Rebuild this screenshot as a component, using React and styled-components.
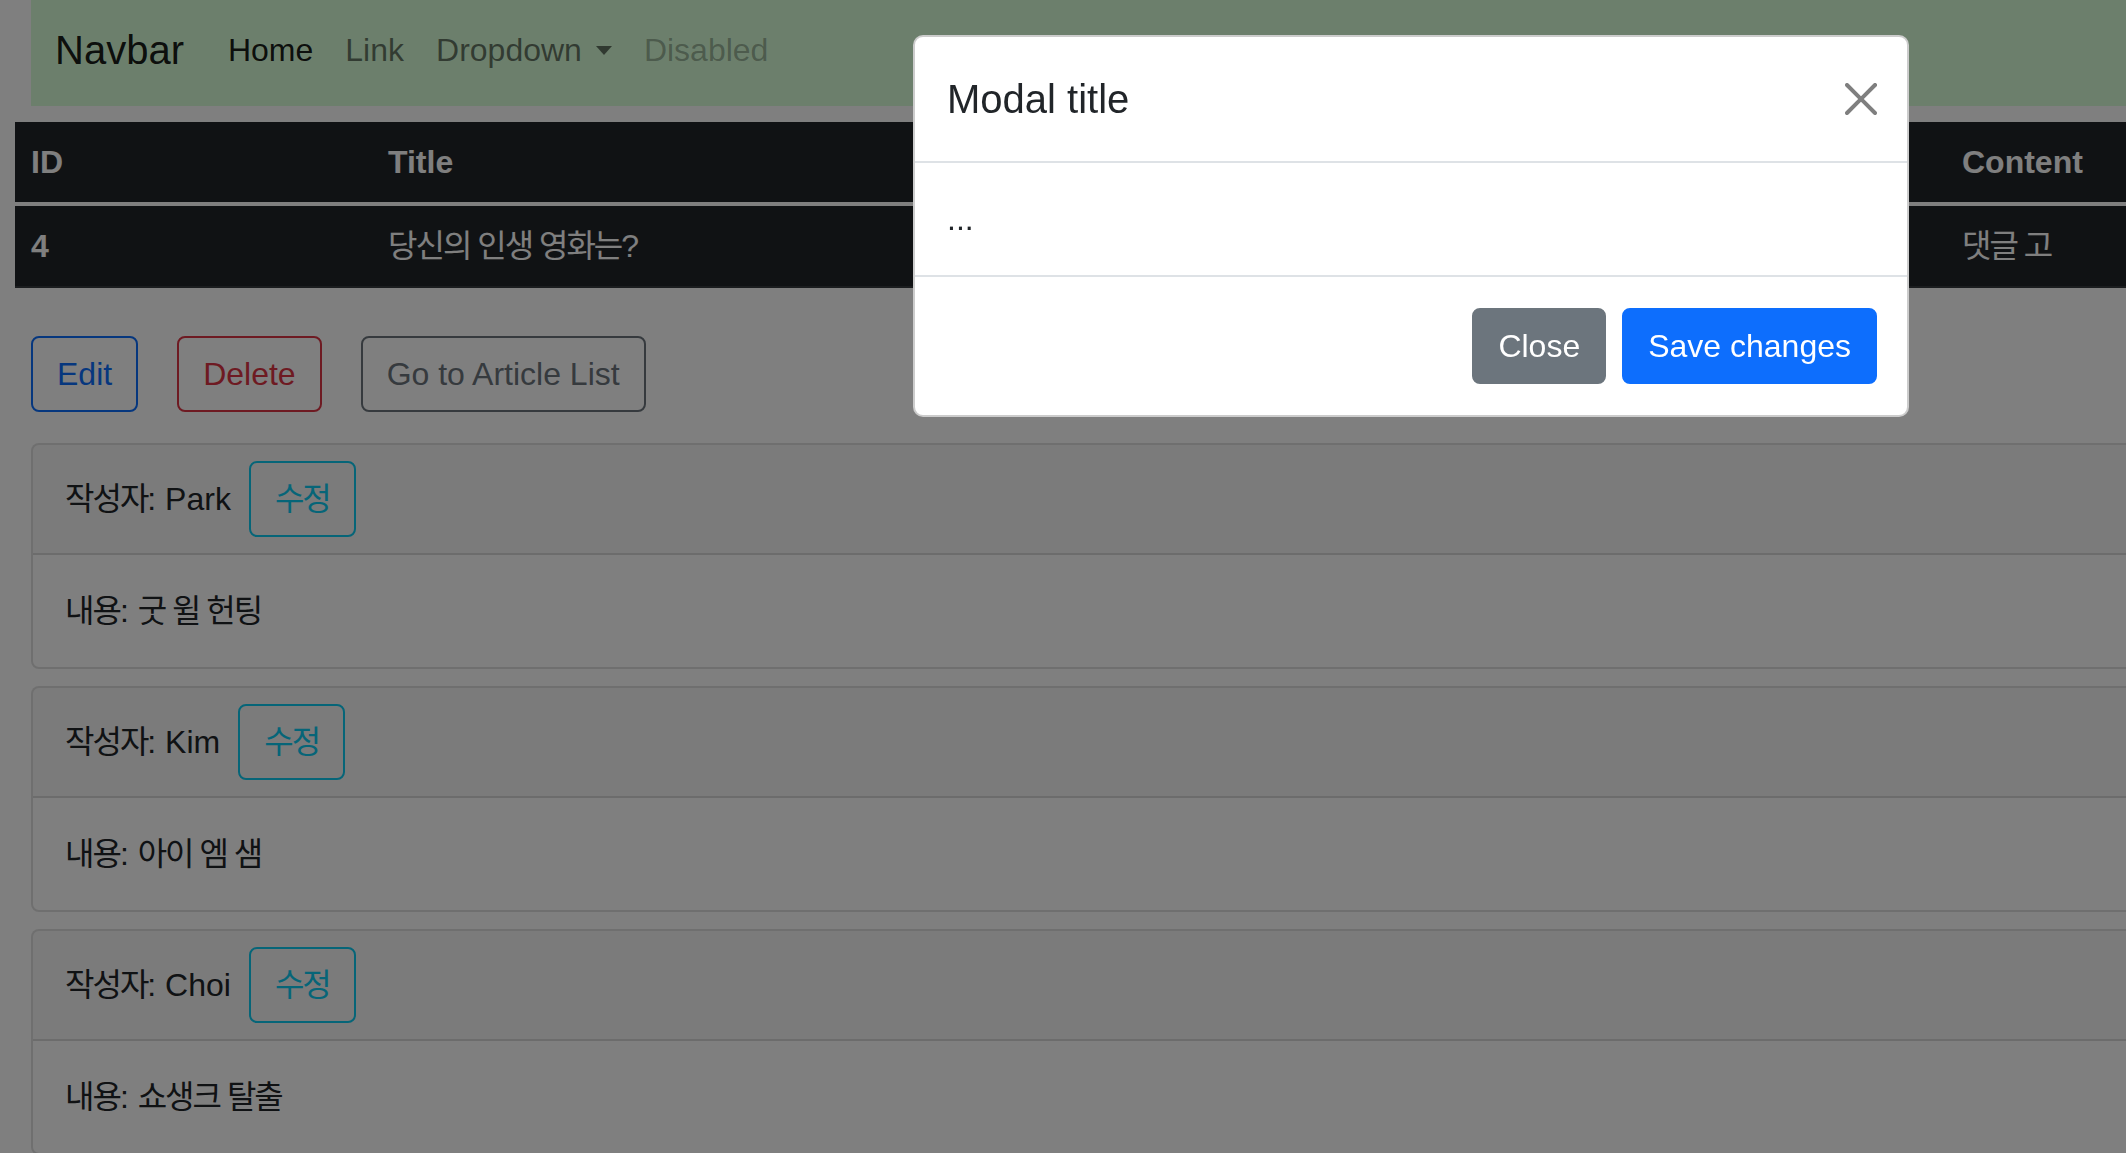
import styled, { createGlobalStyle } from 'styled-components';

const comments = [
  { author: 'Park', content: '굿 윌 헌팅' },
  { author: 'Kim', content: '아이 엠 샘' },
  { author: 'Choi', content: '쇼생크 탈출' },
];

const App = () => {
  return (
    <>
      <GlobalStyle />
      <Page>
        {/* NAVBAR */}
        <Navbar>
          <Brand>Navbar</Brand>
          <NavLink $tone="active">Home</NavLink>
          <NavLink>Link</NavLink>
          <NavLink>
            Dropdown <Caret />
          </NavLink>
          <NavLink $tone="disabled">Disabled</NavLink>
        </Navbar>

        {/* ARTICLE TABLE */}
        <Table>
          <thead>
            <tr>
              <HeadCell $w={357}>ID</HeadCell>
              <HeadCell $w={1574}>Title</HeadCell>
              <HeadCell>Content</HeadCell>
            </tr>
          </thead>
          <tbody>
            <tr>
              <BodyCell as="th">4</BodyCell>
              <BodyCell>
                <Ko>당신의 인생 영화는</Ko>?
              </BodyCell>
              <BodyCell>
                <Ko>댓글 고</Ko>
              </BodyCell>
            </tr>
          </tbody>
        </Table>

        {/* ACTIONS */}
        <Actions>
          <OutlineButton $color="#0d6efd">Edit</OutlineButton>
          <OutlineButton $color="#dc3545">Delete</OutlineButton>
          <OutlineButton $color="#6c757d">Go to Article List</OutlineButton>
        </Actions>

        {/* COMMENTS */}
        <Comments>
          {comments.map((c) => (
            <Card key={c.author}>
              <CardHeader>
                <span>
                  <Ko>작성자</Ko>: {c.author}
                </span>
                <OutlineButton $color="#0dcaf0" $small>
                  <Ko>수정</Ko>
                </OutlineButton>
              </CardHeader>
              <CardBody>
                <Ko>내용</Ko>: <Ko>{c.content}</Ko>
              </CardBody>
            </Card>
          ))}
        </Comments>
      </Page>

      {/* MODAL */}
      <Backdrop />
      <ModalWrap>
        <Dialog>
          <ModalHeader>
            <ModalTitle>Modal title</ModalTitle>
            <CloseX aria-label="Close">
              <svg width="32" height="32" viewBox="0 0 16 16">
                <path
                  fill="#000"
                  fillOpacity="0.5"
                  d="M.293.293a1 1 0 0 1 1.414 0L8 6.586 14.293.293a1 1 0 1 1 1.414 1.414L9.414 8l6.293 6.293a1 1 0 0 1-1.414 1.414L8 9.414l-6.293 6.293a1 1 0 0 1-1.414-1.414L6.586 8 .293 1.707a1 1 0 0 1 0-1.414z"
                />
              </svg>
            </CloseX>
          </ModalHeader>
          <ModalBody>...</ModalBody>
          <ModalFooter>
            <SolidButton $bg="#6c757d">Close</SolidButton>
            <SolidButton $bg="#0d6efd">Save changes</SolidButton>
          </ModalFooter>
        </Dialog>
      </ModalWrap>
    </>
  );
};

/* ================= STYLES ================= */

const GlobalStyle = createGlobalStyle`
  * { box-sizing: border-box; }

  html, body {
    margin: 0;
    padding: 0;
    overflow: hidden;
    background: #fff;
  }

  body {
    font-family: "Liberation Sans", "Noto Sans CJK KR", sans-serif;
    font-size: 32px;
    line-height: 1.5;
    color: #212529;
  }
`;

// hangul in the shot is set narrower than Noto CJK
const Ko = styled.span`
  letter-spacing: -2px;
`;

const Page = styled.div`
  width: 2822px;
  padding-left: 15px;
`;

/* NAVBAR */
const Navbar = styled.nav`
  height: 106px;
  margin-left: 16px;
  padding: 0 24px 6px;
  display: flex;
  align-items: center;
  background: #d8ffd8;
`;

const Brand = styled.span`
  font-size: 40px;
  color: rgba(0, 0, 0, 0.9);
  margin-right: 28px;
`;

const NavLink = styled.span`
  display: flex;
  align-items: center;
  padding: 0 16px;
  color: ${({ $tone }) =>
    $tone === 'active'
      ? 'rgba(0, 0, 0, 0.9)'
      : $tone === 'disabled'
      ? 'rgba(0, 0, 0, 0.3)'
      : 'rgba(0, 0, 0, 0.55)'};
`;

const Caret = styled.i`
  display: inline-block;
  margin-left: 14px;
  border-top: 9px solid currentColor;
  border-left: 8px solid transparent;
  border-right: 8px solid transparent;
`;

/* TABLE */
const Table = styled.table`
  width: 2790px;
  margin-top: 16px;
  border-collapse: collapse;
  background: #212529;
  color: #fff;
  text-align: left;
`;

const HeadCell = styled.th`
  width: ${({ $w }) => ($w ? `${$w}px` : 'auto')};
  padding: 16px;
  font-weight: 700;
  line-height: 48px;
`;

const BodyCell = styled.td`
  padding: 16px;
  line-height: 48px;
  border-top: 4px solid #fff;
  border-bottom: 2px solid #373b3e;
  font-weight: ${({ as }) => (as === 'th' ? 700 : 400)};
  white-space: nowrap;
`;

/* BUTTONS */
const Actions = styled.div`
  display: flex;
  gap: 39px;
  margin: 48px 0 0 16px;
`;

const OutlineButton = styled.button`
  font: inherit;
  line-height: 48px;
  padding: 12px 24px;
  border: 2px solid ${({ $color }) => $color};
  border-radius: 8px;
  background: transparent;
  color: ${({ $color }) => $color};
  margin-left: ${({ $small }) => ($small ? '18px' : '0')};
  cursor: pointer;
`;

const SolidButton = styled.button`
  font: inherit;
  line-height: 48px;
  padding: 12px 24px;
  margin: 8px;
  border: 2px solid ${({ $bg }) => $bg};
  border-radius: 8px;
  background: ${({ $bg }) => $bg};
  color: #fff;
`;

/* COMMENT CARDS */
const Comments = styled.div`
  margin: 31px 0 0 16px;
  display: flex;
  flex-direction: column;
  gap: 17px;
`;

const Card = styled.div`
  border: 2px solid rgba(0, 0, 0, 0.125);
  border-radius: 8px;
  background: #fff;
  overflow: hidden;
`;

const CardHeader = styled.div`
  display: flex;
  align-items: center;
  padding: 16px 32px;
  background: rgba(0, 0, 0, 0.03);
  border-bottom: 2px solid rgba(0, 0, 0, 0.125);
`;

const CardBody = styled.div`
  padding: 32px;
`;

/* MODAL */
const Backdrop = styled.div`
  position: fixed;
  inset: 0;
  background: rgba(0, 0, 0, 0.5);
`;

const ModalWrap = styled.div`
  position: fixed;
  top: 0;
  left: 0;
  width: 2822px;
`;

const Dialog = styled.div`
  width: 996px;
  margin: 35px auto 0;
  background: #fff;
  border: 2px solid rgba(0, 0, 0, 0.2);
  border-radius: 10px;
`;

const ModalHeader = styled.div`
  display: flex;
  align-items: center;
  padding: 32px;
  border-bottom: 2px solid #dee2e6;
`;

const ModalTitle = styled.h5`
  margin: 0;
  font-size: 40px;
  font-weight: 500;
  line-height: 60px;
`;

const CloseX = styled.button`
  display: flex;
  align-items: center;
  justify-content: center;
  width: 48px;
  height: 48px;
  padding: 0;
  margin: -16px -10px -16px auto;
  border: 0;
  background: transparent;
`;

const ModalBody = styled.div`
  padding: 32px;
`;

const ModalFooter = styled.div`
  display: flex;
  justify-content: flex-end;
  padding: 23px 22px;
  border-top: 2px solid #dee2e6;
`;

export default App;
